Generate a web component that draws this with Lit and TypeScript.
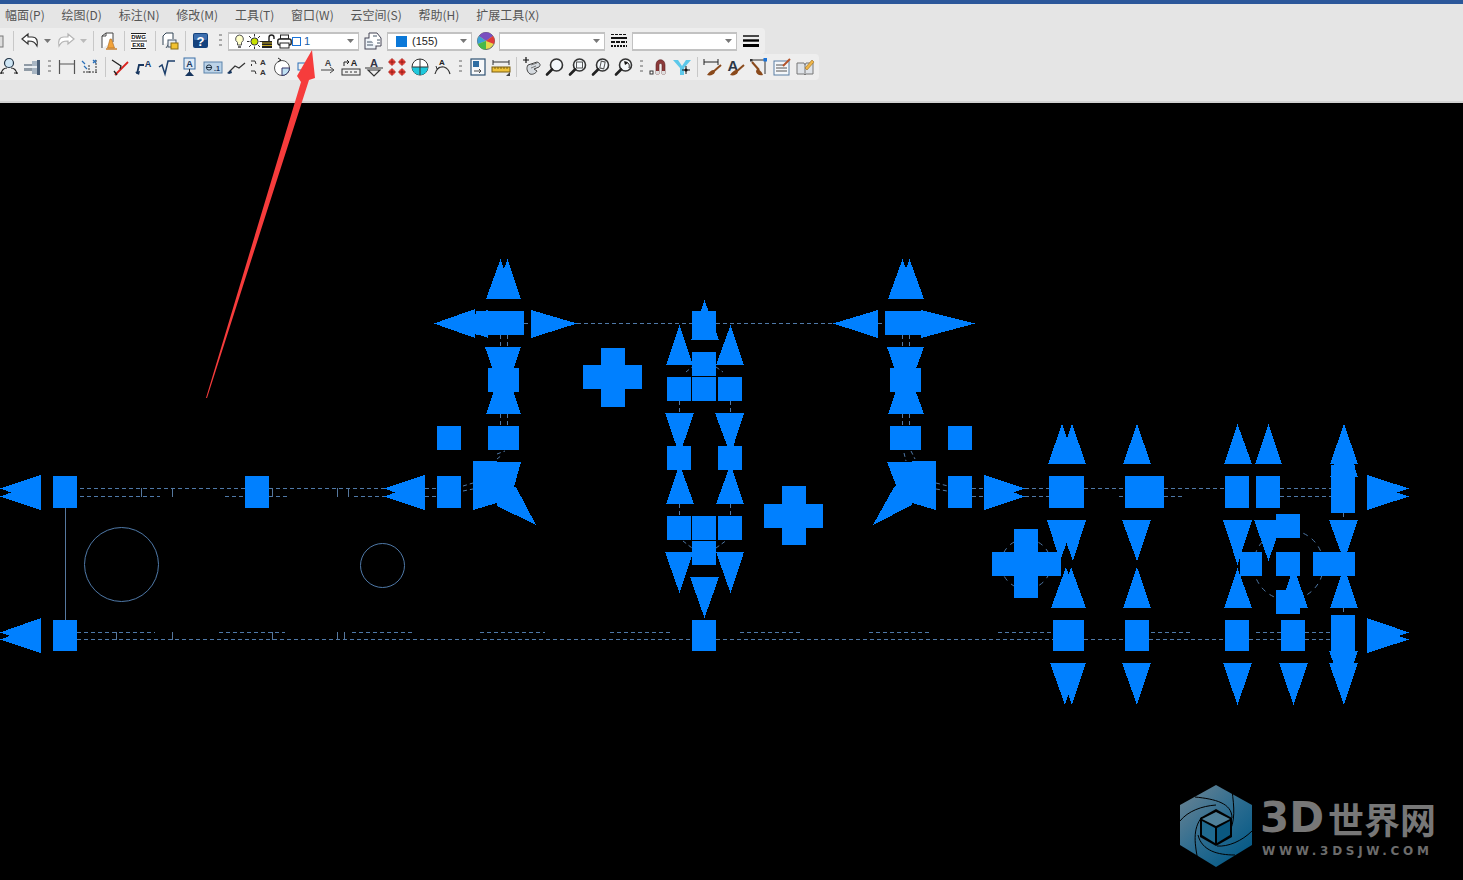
import { LitElement, html, css, svg } from 'lit';
import { customElement } from 'lit/decorators.js';

const ic = (body: unknown) => html`<svg class="ic" viewBox="0 0 20 20">${body}</svg>`;

// toolbar drawings, all on a 20x20 box
const caret = (c: string) => html`<svg width="9" height="5" viewBox="0 0 9 5"><path d="M1 0H8L4.5 4Z" fill=${c}/></svg>`;
const grip = html`<svg width="3" height="16" viewBox="0 0 3 16"><path d="M0 1h3v2H0zM0 6h3v2H0zM0 11h3v2H0z" fill="#a9a9a9"/></svg>`;
const lens = (inner: unknown = '') => svg`<circle cx="11.5" cy="8" r="6" fill="#f4f8fb" stroke="#333" stroke-width="1.6"/>${inner}<path d="M7 12.5 2 17.5" stroke="#222" stroke-width="2.6" stroke-linecap="round"/>`;
const brush = svg`<path d="M18 8 10 15" stroke="#8a4a1c" stroke-width="2"/><path d="M11 13c-3 0-5 2-7 5 3 1 7 0 8-3Z" fill="#8a4a1c"/>`;
const redo = svg`<path d="M18 8 12 3V6H8C3 6 2 10 3 15 5 11 7 10 12 10v3Z" fill="#fff" stroke="#b4b4b4" stroke-width="1.2"/>`;

const row1: [number, unknown][] = [
  [6, ic(svg`<rect x="-2" y="5" width="12" height="11" fill="#ddd" stroke="#777"/>`)],
  [14, html`<i class="sep"></i>`],
  [20, ic(svg`<path d="M2 8 8 3V6h4c5 0 6 4 5 9-2-4-4-5-9-5v3Z" fill="#fff" stroke="#333" stroke-width="1.2"/>`)],
  [15, caret('#777')],
  [21, ic(redo)],
  [15, caret('#bbb')],
  [4, html`<i class="sep"></i>`],
  [26, ic(svg`<path d="M4 17V5l4-3h7v9" fill="#fff" stroke="#444"/><path d="M8 2v3H4" fill="none" stroke="#444"/><path d="M12 8h1.5l3 9h-7Z" fill="#f2a33a" stroke="#a8641a" stroke-width=".6"/><path d="M8 18h11" stroke="#c77a20" stroke-width="1.4"/>`)],
  [6, html`<i class="sep"></i>`],
  [24, ic(svg`<rect x="2" y="2" width="15" height="16" fill="#fff"/><path d="M2 2.5h15M2 10h16M2 17.5h15" stroke="#222"/><text x="9.5" y="8.4" class="mini" font-size="6" fill="#111" text-anchor="middle">DWG</text><text x="9.5" y="16" class="mini" font-size="6" fill="#111" text-anchor="middle">EXB</text>`)],
  [8, html`<i class="sep"></i>`],
  [22, ic(svg`<path d="M3 14V5l3-3h7v6" fill="#fff" stroke="#345"/><path d="M6 17 10 11h3" fill="none" stroke="#456"/><rect x="8" y="9" width="8" height="7" fill="#e9eef3" stroke="#456"/><rect x="11" y="12" width="7" height="6" fill="#f2c230" stroke="#8a6d10"/>`)],
  [8, html`<i class="sep"></i>`],
  [24, ic(svg`<rect x="2" y="2" width="15" height="15" rx="2" fill="#14427d"/><rect x="3" y="3" width="13" height="6" rx="1" fill="#3d6fae"/><text x="9.5" y="15" class="mini" font-size="13" fill="#fff" text-anchor="middle">?</text>`)],
  [15, grip],
];

const row2: (unknown)[] = [
  ic(svg`<circle cx="10" cy="6" r="4.5" fill="#cfe6f5" stroke="#234" stroke-width="1.2"/><path d="M2 17c1-5 4-6 6-6M18 17c-1-5-4-6-6-6" fill="none" stroke="#222" stroke-width="1.2"/><path d="M1 16h4M15 16h4" stroke="#222"/>`),
  ic(svg`<rect x="2" y="7" width="8" height="7" fill="#8f9aa5"/><rect x="10" y="4" width="5" height="13" fill="#a8b6c4"/><rect x="15" y="3" width="3" height="15" fill="#4a5f78"/><rect x="2" y="9" width="13" height="2" fill="#e8edf2"/>`),
  'grip',
  ic(svg`<path d="M2.5 3v14M17.5 3v14M2.5 7h15" stroke="#555" stroke-width="1.2" fill="none"/>`),
  ic(svg`<path d="M3 15h14M9 8v9M16 3v13" stroke="#333" stroke-dasharray="2 1" fill="none"/><path d="M2 4l3 3M4 9 7 12M13 3l3 3M16 3l-3 3" stroke="#2a6fb8" stroke-width="1.2"/>`),
  'sep',
  ic(svg`<path d="M4 18 17 5" stroke="#d9231f" stroke-width="1.8"/><path d="M1 3 10 9M7 7l3 2-1 3M3 14l3 4" stroke="#222" stroke-width="1.3" fill="none"/>`),
  ic(svg`<path d="M3 17 5 8h5" fill="none" stroke="#17365f" stroke-width="1.8"/><path d="M1 15l4 3 1-4Z" fill="#17365f"/><text x="14" y="10" class="mini" font-size="9" fill="#17365f" text-anchor="middle">A</text>`),
  ic(svg`<path d="M2 10l3-2 3 9 3-13h7" fill="none" stroke="#1d3f6b" stroke-width="1.5"/>`),
  ic(svg`<rect x="4" y="1" width="11" height="11" fill="#dfeaf5" stroke="#3a6ea5"/><text x="9.5" y="10" class="mini" font-size="9" fill="#17365f" text-anchor="middle">A</text><path d="M9.5 12v3" stroke="#222"/><path d="M5 19l4.5-5 4.5 5Z" fill="#17365f"/>`),
  ic(svg`<rect x="1" y="5" width="18" height="11" fill="#bcd3e8" stroke="#5d84ab"/><circle cx="6" cy="10.5" r="2.6" fill="none" stroke="#234"/><path d="M3 10.5h6" stroke="#234"/><text x="14" y="14" class="mini" font-size="7" fill="#17365f" text-anchor="middle">.1</text>`),
  ic(svg`<path d="M3 15 9 9l4 2 6-5" fill="none" stroke="#333" stroke-width="1.2"/><path d="M1 16l4-3 1 3-3 1Z" fill="#17365f"/>`),
  ic(svg`<text x="14" y="8" class="mini" font-size="8" fill="#333" text-anchor="middle">A</text><text x="14" y="18" class="mini" font-size="8" fill="#333" text-anchor="middle">A</text><path d="M2 4h4l1 3M2 14h4l1 3M3 9l-1-1 1-1" fill="none" stroke="#333"/>`),
  ic(svg`<circle cx="10" cy="11" r="7.5" fill="#fff" stroke="#555"/><path d="M10 11h7.5a7.5 7.5 0 0 1-7.5 7.5Z" fill="#bfe0f2" stroke="#336"/><path d="M6 1l3 2-3 2" fill="none" stroke="#222"/>`),
  ic(svg`<rect x="3" y="6" width="12" height="7" fill="none" stroke="#2a6fb8"/>`),
  ic(svg`<text x="10" y="9" class="mini" font-size="9" fill="#444" text-anchor="middle">A</text><path d="M3 13h12M12 10l4 3-4 3" fill="none" stroke="#444"/>`),
  ic(svg`<text x="13" y="9" class="mini" font-size="9" fill="#222" text-anchor="middle">A</text><path d="M3 9V5h4M6 3l2 2-2 2" fill="none" stroke="#222"/><rect x="1" y="12" width="18" height="6" fill="#eee" stroke="#333"/><path d="M4 15h3M9 15h2M13 15h3" stroke="#333"/>`),
  ic(svg`<text x="10" y="10" class="mini" font-size="11" fill="#334" text-anchor="middle">A</text><path d="M1 11h18" stroke="#333"/><path d="M4 13h12l-6 6Z" fill="none" stroke="#333" stroke-width="1.2"/>`),
  ic(svg`${[5, 15].map(x => [5, 15].map(y => svg`<circle cx=${x} cy=${y} r="3" fill="#e8453c"/><path d="M${x - 4} ${y}h8M${x} ${y - 4}v8" stroke="#8c1510" stroke-width=".8"/>`))}`),
  ic(svg`<circle cx="10" cy="10" r="8" fill="#fff" stroke="#333"/><path d="M2 10h16a8 8 0 0 1-16 0Z" fill="#1ec8dc"/><path d="M10 2v16M2 10h16" stroke="#333"/>`),
  ic(svg`<text x="9" y="8" class="mini" font-size="8" fill="#222" text-anchor="middle">A</text><path d="M2 17c1-5 5-8 9-7 3 1 5 3 6 7" fill="none" stroke="#333" stroke-width="1.2"/><path d="M3 9l1 3 3-2" fill="none" stroke="#333"/>`),
  'grip',
  ic(svg`<rect x="3" y="2" width="14" height="16" fill="#f6f8fa" stroke="#2f5373" stroke-width="1.2"/><rect x="5" y="4" width="6" height="6" fill="#2f6ea3"/><path d="M6 14h7M11 12l2 2-2 2" fill="none" stroke="#444"/>`),
  ic(svg`<path d="M2 3v5M18 3v5M2 5h16" stroke="#333" fill="none"/><rect x="1" y="10" width="18" height="5" fill="#efc23a" stroke="#7a5e10"/><path d="M4 10v2M7 10v2M10 10v2M13 10v2M16 10v2" stroke="#7a5e10"/><path d="M19 19h-4l4-4Z" fill="#444"/>`),
  'sep',
  ic(svg`<path d="M8 17c-3-2-4-6-2-9l9-3c3 1 4 3 2 5l-5 2 3 2c-1 2-4 4-7 3Z" fill="#d6dbe0" stroke="#444"/><path d="M1 3h6M4 0v6" stroke="#111" stroke-width="1.2"/><path d="M9 8l6-2M9 11l5-2" stroke="#777"/>`),
  ic(lens()),
  ic(lens(svg`<rect x="8.5" y="5" width="6" height="6" fill="none" stroke="#555"/>`)),
  ic(lens(svg`<rect x="9.5" y="4.5" width="4" height="7" fill="none" stroke="#555" transform="rotate(12 11.5 8)"/>`)),
  ic(lens(svg`<path d="M14 6 10 4l1 4Z" fill="#111"/><path d="M11 5c3 0 5 2 4 6" fill="none" stroke="#111"/>`)),
  'grip',
  ic(svg`<path d="M7 17V8c0-7 9-7 9 0v9h-3V8c0-2-3-2-3 0v9Z" fill="#8c3a3a" stroke="#5a2222" stroke-width=".6"/><path d="M7 14h3v3H7zM13 14h3v3h-3z" fill="#ddd"/><rect x="1" y="14" width="3" height="3" fill="#fff" stroke="#333"/>`),
  ic(svg`<path d="M1 3h5l4 6 4-6h5l-7 8v7H8v-7Z" fill="#5cc8ea"/><path d="M10 13h8M14 9v8" stroke="#111"/><circle cx="14" cy="13" r="1.6" fill="#111"/>`),
  'sep',
  ic(svg`<path d="M1 2v6M15 2v6M1 5h14" stroke="#222" fill="none"/>${brush}`),
  ic(svg`<text x="7" y="14" class="mini" font-size="15" fill="#2c3746" text-anchor="middle">A</text>${brush}`),
  ic(svg`<path d="M2 3h14v14" fill="none" stroke="#333"/><rect x="14.5" y="1" width="3.5" height="3.5" fill="#1a73d8"/><rect x="1" y="2" width="2.5" height="2.5" fill="#333"/><path d="M3 5l7 8" stroke="#8a4a1c" stroke-width="2"/><path d="M8 12c2 0 5 3 6 6-4 1-7-1-7-4Z" fill="#8a4a1c"/>`),
  ic(svg`<rect x="2" y="4" width="15" height="14" fill="#f4f7fa" stroke="#5a7ea3"/><path d="M4 8h8M4 11h11M4 14h11" stroke="#555"/><path d="M11 9l7-7" stroke="#b4532a" stroke-width="2"/>`),
  ic(svg`<path d="M2 6h7l1 2 1-2h7v11h-7l-1 1-1-1H2Z" fill="#dfe3e8" stroke="#777"/><path d="M10 8v9" stroke="#777"/><path d="M10 11l7-8 2 2-7 8Z" fill="#efb64a" stroke="#9a6a18" stroke-width=".6"/>`),
];

const MENU = ['幅面(P)', '绘图(D)', '标注(N)', '修改(M)', '工具(T)', '窗口(W)', '云空间(S)', '帮助(H)', '扩展工具(X)'];

// [x, y, w, h]
const RECTS = [
  [53, 476, 24, 32], [245, 476, 24, 32], [437, 476, 24, 32], [53, 620, 24, 31],
  [476, 311, 48, 24], [488, 368, 31, 24], [488, 426, 31, 24], [437, 426, 24, 24],
  [692, 311, 24, 25], [692, 352, 24, 24], [667, 377, 24, 24], [692, 377, 24, 24], [718, 377, 24, 24],
  [667, 446, 24, 24], [718, 446, 24, 24], [667, 516, 24, 24], [692, 516, 24, 24], [718, 516, 24, 24],
  [692, 541, 24, 24], [692, 620, 24, 31],
  [885, 311, 40, 24], [890, 368, 31, 24], [890, 426, 31, 24], [948, 426, 24, 24], [948, 476, 24, 32],
  [583, 365, 59, 24], [601, 348, 24, 59], [764, 504, 59, 24], [782, 486, 24, 59], [992, 552, 69, 24], [1014, 529, 24, 69],
  [1049, 476, 35, 32], [1053, 620, 31, 31], [1125, 476, 39, 32], [1125, 620, 24, 31],
  [1225, 476, 24, 32], [1240, 552, 22, 24], [1225, 620, 24, 31],
  [1256, 476, 24, 32], [1276, 514, 24, 24], [1276, 552, 24, 24], [1276, 590, 24, 24], [1281, 620, 24, 31],
  [1331, 465, 24, 48], [1313, 552, 42, 24], [1331, 615, 24, 42],
];

// [base1x, base1y, base2x, base2y, tipx, tipy]
const upTri = (l: number, r: number, y: number, tx: number, ty: number) => [l, y, r, y, tx, ty];
const hArrow = (bx: number, top: number, tip: number, t1: number, t2: number) => [
  [bx, top, bx, top + 28, tip, t1], [bx, top + 7, bx, top + 35, tip, t2],
];
const TRIS = [
  ...hArrow(41, 475, 0, 488.5, 496.5), ...hArrow(41, 618, 0, 632.5, 639.5),
  ...hArrow(425, 475, 384, 488.5, 496.5), ...hArrow(984, 475, 1025, 488.5, 496.5),
  ...hArrow(1367, 475, 1409, 488.5, 496.5), ...hArrow(1367, 618, 1409, 632.5, 639.5),
  upTri(486, 514, 299, 500.5, 259), upTri(493, 521, 299, 507.5, 259),
  [475, 309, 475, 338, 434, 323.5], [488, 310, 488, 338, 447, 323.5], [531, 310, 531, 338, 577, 323.5],
  upTri(485, 513, 347, 499, 388), upTri(493, 521, 347, 507, 388),
  upTri(486, 514, 414, 500, 373), upTri(493, 521, 414, 507, 373),
  upTri(691, 719, 340, 704.5, 300),
  upTri(666, 693, 365, 679.5, 325), upTri(716, 744, 365, 730.5, 325),
  upTri(665, 694, 413, 679.5, 455), upTri(715, 744, 413, 730.5, 455),
  upTri(666, 694, 504, 679.5, 464), upTri(716, 744, 504, 730.5, 464),
  upTri(665, 693, 552, 679.5, 593), upTri(716, 744, 552, 730.5, 593),
  upTri(690, 719, 577, 704.5, 618),
  upTri(888, 917, 299, 902.5, 259), upTri(895, 924, 299, 909.5, 259),
  [878, 310, 878, 338, 833, 323.5], [921, 310, 921, 338, 975, 323.5],
  upTri(887, 916, 347, 901, 388), upTri(895, 924, 347, 909, 388),
  upTri(888, 917, 414, 902, 373), upTri(895, 924, 414, 909, 373),
  upTri(1048, 1076, 464, 1062, 424), upTri(1058, 1086, 464, 1072, 424),
  upTri(1047, 1075, 520, 1060, 561), upTri(1058, 1086, 520, 1073, 561),
  upTri(1051, 1080, 608, 1066, 567), upTri(1058, 1086, 608, 1071, 567),
  upTri(1050, 1079, 663, 1065, 705), upTri(1058, 1086, 663, 1072, 705),
  upTri(1123, 1151, 464, 1137, 424), upTri(1122, 1151, 520, 1137, 561),
  upTri(1123, 1151, 608, 1137, 567), upTri(1122, 1151, 663, 1137, 705),
  upTri(1224, 1252, 464, 1237.5, 424), upTri(1223, 1252, 520, 1237.5, 565),
  upTri(1224, 1252, 608, 1237.5, 568), upTri(1223, 1252, 663, 1237.5, 705),
  upTri(1255, 1282, 464, 1268.5, 424), upTri(1254, 1283, 520, 1268.5, 561),
  upTri(1280, 1308, 608, 1293.5, 567), upTri(1279, 1308, 663, 1293.5, 705),
  upTri(1330, 1358, 464, 1344, 424), upTri(1330, 1358, 477, 1344, 437),
  upTri(1329, 1358, 520, 1344, 561), upTri(1330, 1358, 608, 1344, 567),
  upTri(1329, 1358, 651, 1344, 691), upTri(1329, 1358, 663, 1344, 705),
];

const BLOBS = [
  '473,461 497,461 497,462 521,462 514,487 516,487 536,525 497,506 497,503 473,510',
  '936,461 912,461 912,462 887,462 896,485 894,487 873,525 912,505 912,503 936,510',
];

// [x1, x2, y]
const DASH_H = [
  [80, 245, 488.5], [269, 384, 488.5], [80, 160, 496.5], [225, 245, 496.5], [269, 290, 496.5], [354, 384, 496.5],
  [425, 437, 488.5], [425, 437, 496.5],
  [77, 155, 632.5], [219, 285, 632.5], [352, 414, 632.5], [480, 545, 632.5], [610, 673, 632.5], [740, 803, 632.5], [869, 932, 632.5],
  [998, 1053, 632.5], [1151, 1191, 632.5], [1256, 1281, 632.5], [1305, 1331, 632.5],
  [77, 692, 639.5], [716, 1053, 639.5], [1084, 1125, 639.5], [1149, 1225, 639.5], [1249, 1281, 639.5], [1305, 1331, 639.5],
  [577, 692, 323.5], [716, 833, 323.5], [878, 885, 323.5], [524, 531, 323.5],
  [972, 984, 488.5], [972, 984, 496.5], [1025, 1049, 488.5], [1025, 1049, 496.5],
  [1084, 1125, 488.5], [1119, 1125, 496.5], [1164, 1225, 488.5], [1164, 1184, 496.5],
  [1280, 1331, 488.5], [1280, 1331, 496.5],
];
// [x, y1, y2]
const DASH_V = [
  [500.5, 335, 347], [507.5, 335, 347], [500.5, 414, 426], [507.5, 414, 426],
  [902.5, 335, 347], [909.5, 335, 347], [902.5, 414, 426], [909.5, 414, 426],
  [679.5, 401, 413], [730.5, 401, 413], [679.5, 504, 516], [730.5, 504, 516],
  [1343.5, 513, 520], [1343.5, 608, 615],
];
const TICKS = [
  [141.5, 488, 497], [172.5, 488, 497], [272.5, 488, 497], [337.5, 488, 497], [348.5, 488, 497],
  [116.5, 632, 640], [172.5, 632, 640], [272.5, 632, 640], [337.5, 632, 640], [344.5, 632, 640],
];
const DASH_C = [[1026, 564, 25], [1288.5, 565, 35]];
const BITS = [
  'M463 486 473 483', 'M463 491 473 489', 'M497 454 505 451', 'M497 459 502 455',
  'M936 483 948 486', 'M936 489 947 491', 'M904 453 906 461', 'M911 451 915 459',
  'M686 372 692 367', 'M716 367 723 372', 'M683 541 692 548', 'M716 548 727 540',
];

@customElement('app-root')
export class AppRoot extends LitElement {
  static styles = css`
    :host {
      display: flex;
      flex-direction: column;
      position: relative;
      width: 1463px;
      height: 880px;
      overflow: hidden;
      background: #000;
      font-family: 'Noto Sans CJK SC', 'Liberation Sans', sans-serif;
    }
    .titlebar { height: 4px; background: #2b579a; }
    .chrome {
      height: 97px;
      background: #e5e5e5;
      border-bottom: 2px solid #d2d2d2;
    }
    .menu {
      display: flex;
      box-sizing: border-box;
      height: 24px;
      padding: 0 0 4px 5px;
      gap: 16.8px;
      align-items: center;
      font-size: 12px;
      color: #555;
      white-space: nowrap;
    }
    .bar {
      display: flex;
      align-items: center;
      width: fit-content;
      background: #eeeeee;
      border-radius: 0 4px 4px 0;
    }
    .row1 { height: 26px; }
    .row2 { height: 26px; margin-left: -3px; padding-right: 3px; }
    .slot {
      flex: none;
      height: 24px;
      display: flex;
      align-items: center;
      justify-content: center;
      overflow: hidden;
    }
    .cell { width: 23px; }
    .gripcell { width: 12px; }
    .sepcell { width: 8px; }
    .ic { width: 20px; height: 20px; flex: none; }
    .mini { font-family: 'Liberation Sans', sans-serif; font-weight: 700; }
    .sep { display: block; width: 1px; height: 20px; background: #c8c8c8; }
    .combo {
      flex: none;
      box-sizing: border-box;
      height: 19px;
      display: flex;
      align-items: center;
      background: #fff;
      border: 1px solid #c2c2c2;
      border-width: 2px 1px;
      font-size: 11px;
      color: #222;
      font-family: 'Liberation Sans', sans-serif;
    }
    .combo .grow { flex: 1; display: flex; align-items: center; min-width: 0; }
    .combo .drop { flex: none; width: 15px; display: flex; justify-content: center; }
    .layer { padding-left: 3px; }
    .mini-ic { width: 15px; height: 15px; flex: none; }
    .swatch { width: 11px; height: 11px; background: #0b78d8; margin: 0 5px 0 8px; flex: none; }
    .layer-num { color: #1a5fa8; margin-left: 3px; }
    .box { width: 7px; height: 7px; border: 1px solid #1a73d8; flex: none; }
    .canvas { flex: 1; min-height: 0; display: block; width: 1463px; background: #000; }
    .solid { fill: #0080ff; shape-rendering: crispEdges; }
    .dash { stroke: #4f79a8; stroke-width: 1; stroke-dasharray: 4 3; fill: none; shape-rendering: crispEdges; }
    .line { stroke: #56789e; stroke-width: 1; fill: none; shape-rendering: crispEdges; }
    .round { stroke: #4f79a8; stroke-width: 1; fill: none; }
    .pointer { position: absolute; left: 0; top: 0; pointer-events: none; }
    .mark {
      position: absolute;
      left: 1180px;
      top: 785px;
      display: flex;
      gap: 8px;
    }
    .mark-text { display: flex; flex-direction: column; color: #777; padding-top: 11px; }
    .mark-big {
      display: flex;
      align-items: center;
      height: 44px;
      font-family: 'Noto Sans CJK SC', sans-serif;
      font-size: 36px;
      font-weight: 700;
      line-height: 44px;
      white-space: nowrap;
    }
    .mark-big b { font-family: 'DejaVu Sans', sans-serif; font-size: 42px; margin-right: 4px; }
    .mark-small {
      font-family: 'DejaVu Sans', sans-serif;
      font-size: 12px;
      font-weight: 700;
      letter-spacing: 3.7px;
      line-height: 14px;
      margin: 4px 0 0 2px;
      color: #6c6c6c;
      white-space: nowrap;
    }
  `;

  private renderRow2() {
    return row2.map(item => {
      if (item === 'grip') return html`<div class="slot gripcell">${grip}</div>`;
      if (item === 'sep') return html`<div class="slot sepcell"><i class="sep"></i></div>`;
      return html`<div class="slot cell">${item}</div>`;
    });
  }

  private renderCanvas() {
    return html`<svg class="canvas" viewBox="0 103 1463 777">
      ${DASH_H.map(([a, b, y]) => svg`<path class="dash" d="M${a} ${y}H${b}"/>`)}
      ${DASH_V.map(([x, a, b]) => svg`<path class="dash" d="M${x} ${a}V${b}"/>`)}
      ${TICKS.map(([x, a, b]) => svg`<path class="line" d="M${x} ${a}V${b}"/>`)}
      ${DASH_C.map(([x, y, r]) => svg`<circle class="round" stroke-dasharray="5 5" cx=${x} cy=${y} r=${r}/>`)}
      ${BITS.map(d => svg`<path class="round" stroke-dasharray="4 3" d=${d}/>`)}
      <path class="line" d="M65.5 508V620"/>
      <circle class="round" cx="121.5" cy="564.5" r="37"/>
      <circle class="round" cx="382.5" cy="565.5" r="22"/>
      ${RECTS.map(([x, y, w, h]) => svg`<rect class="solid" x=${x} y=${y} width=${w} height=${h}/>`)}
      ${TRIS.map(p => svg`<polygon class="solid" points=${p.join(' ')}/>`)}
      ${BLOBS.map(p => svg`<polygon class="solid" points=${p}/>`)}
    </svg>`;
  }

  private renderLogo() {
    return html`<svg width="72" height="82" viewBox="0 0 72 82">
      <defs>
        <linearGradient id="hex" x1="0.15" y1="0.1" x2="0.85" y2="0.9">
          <stop offset="0" stop-color="#5f7f92"/>
          <stop offset="0.5" stop-color="#2c6c90"/>
          <stop offset="1" stop-color="#065a86"/>
        </linearGradient>
      </defs>
      <path d="M36 0 72 20V60L36 82 0 60V20Z" fill="url(#hex)"/>
      <g fill="none" stroke="#000" stroke-width="1">
        <path d="M15 12C35 14 52 18 52 33"/>
        <path d="M52 5C54 22 56 36 48 50"/>
        <path d="M72 46C62 56 48 62 37 61"/>
        <path d="M55 70C38 70 22 66 18 50"/>
        <path d="M18 76C15 60 12 44 22 32"/>
        <path d="M0 36C8 26 22 21 36 20"/>
      </g>
      <path d="M36 24 52 33V52L36 61 20 52V33Z" fill="#000"/>
      <path d="M36 27 50 34 36 41 22 34Z" fill="#4f8099"/>
      <path d="M22 36 35 43V58L22 50Z" fill="#1f6a90"/>
      <path d="M50 36 37 43V58L50 50Z" fill="#0a5880"/>
    </svg>`;
  }

  render() {
    return html`
      <div class="titlebar"></div>
      <div class="chrome">
        <div class="menu">${MENU.map(m => html`<span>${m}</span>`)}</div>
        <div class="bar row1">
          ${row1.map(([w, item]) => html`<div class="slot" style="width:${w}px">${item}</div>`)}
          <div class="combo" style="width:131px">
            <div class="grow layer">
              <svg class="mini-ic" viewBox="0 0 15 15"><path d="M7.5 1a4 4 0 0 0-2 7.4V11h4V8.4A4 4 0 0 0 7.5 1Z" fill="#ffffc8" stroke="#555"/><path d="M6 13h3" stroke="#444" stroke-width="1.6"/></svg>
              <svg class="mini-ic" viewBox="0 0 15 15"><circle cx="7.5" cy="7.5" r="3.6" fill="#c8e000" stroke="#334"/><path d="M7.5 0v2.5M7.5 12.5V15M0 7.5h2.5M12.5 7.5H15M2 2l2 2M11 11l2 2M13 2l-2 2M4 11l-2 2" stroke="#333"/></svg>
              <svg class="mini-ic" viewBox="0 0 15 15"><path d="M7 7V3.5a2.5 2.5 0 0 1 5 0V5" fill="none" stroke="#222" stroke-width="1.4"/><rect x="0" y="7" width="10" height="7" fill="#222"/><path d="M0 9h10M0 11.5h10" stroke="#c4a820"/></svg>
              <svg class="mini-ic" viewBox="0 0 15 15"><rect x="3.5" y="1" width="8" height="4" fill="#fff" stroke="#222"/><rect x="0.8" y="5" width="13.4" height="6" rx="2" fill="#fff" stroke="#222" stroke-width="1.4"/><rect x="3" y="9" width="9" height="5" fill="#fff" stroke="#222"/></svg>
              <span class="box"></span><span class="layer-num">1</span>
            </div>
            <span class="drop">${caret('#777')}</span>
          </div>
          <div class="slot" style="width:28px">${ic(svg`<rect x="2" y="7" width="11" height="11" fill="#eef3f8" stroke="#445"/><path d="M4 11h6M4 14h6" stroke="#456"/><path d="M6 7V2h8l4 5v8h-5" fill="#fff" stroke="#445"/><path d="M10 5h4M14 9h3M14 12h3" stroke="#456"/>`)}</div>
          <div class="combo" style="width:85px">
            <div class="grow"><span class="swatch"></span>(155)</div>
            <span class="drop">${caret('#777')}</span>
          </div>
          <div class="slot" style="width:27px">${html`<svg class="ic" viewBox="0 0 20 20"><circle cx="10" cy="10" r="8.5" fill="#e6d84a" stroke="#666"/><path d="M10 10 3 5A8.5 8.5 0 0 1 17 5Z" fill="#7a4fc0"/><path d="M10 10 17 5A8.5 8.5 0 0 1 18 13Z" fill="#e03a3a"/><path d="M10 10 2 13A8.5 8.5 0 0 1 3 5Z" fill="#3aa0d8"/><path d="M10 10 2 13A8.5 8.5 0 0 0 10 18.5Z" fill="#48b848"/></svg>`}</div>
          <div class="combo" style="width:106px"><div class="grow"></div><span class="drop">${caret('#777')}</span></div>
          <div class="slot" style="width:27px">${ic(svg`<path d="M2 3.5h16" stroke="#111" stroke-dasharray="3 1" stroke-width="1"/><path d="M2 7h16" stroke="#111" stroke-width="2"/><path d="M2 11h16" stroke="#111" stroke-dasharray="4 1" stroke-width="2"/><path d="M2 15h16" stroke="#111" stroke-dasharray="2 1" stroke-width="2"/>`)}</div>
          <div class="combo" style="width:105px"><div class="grow"></div><span class="drop">${caret('#777')}</span></div>
          <div class="slot" style="width:28px">${ic(svg`<path d="M2 5h16" stroke="#000" stroke-width="1.4"/><path d="M2 9.5h16" stroke="#000" stroke-width="2.4"/><path d="M2 14.5h16" stroke="#000" stroke-width="3"/>`)}</div>
        </div>
        <div class="bar row2">${this.renderRow2()}</div>
      </div>
      ${this.renderCanvas()}
      <div class="mark">
        ${this.renderLogo()}
        <div class="mark-text">
          <div class="mark-big"><b>3D</b>世界网</div>
          <div class="mark-small">WWW.3DSJW.COM</div>
        </div>
      </div>
      <svg class="pointer" width="1463" height="880" viewBox="0 0 1463 880">
        <polygon points="206,398 301,82 297,76 312,50 315,78 309,80 207,398" fill="#f63c3c"/>
      </svg>
    `;
  }
}
